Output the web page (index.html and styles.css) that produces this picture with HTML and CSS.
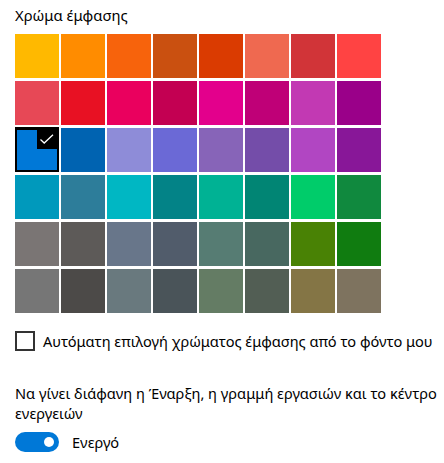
FILE: index.html
```html
<!DOCTYPE html>
<html lang="el">
<head>
	<meta charset="UTF-8">
	<title>Χρώμα έμφασης</title>
	<link rel="stylesheet" href="styles.css">
</head>
<body>

	<h1 class="title">Χρώμα έμφασης</h1>

	<div class="swatches">
		<div class="swatch" style="background:#ffb900"></div>
		<div class="swatch" style="background:#ff8c00"></div>
		<div class="swatch" style="background:#f7630c"></div>
		<div class="swatch" style="background:#ca5010"></div>
		<div class="swatch" style="background:#da3b01"></div>
		<div class="swatch" style="background:#ef6950"></div>
		<div class="swatch" style="background:#d13438"></div>
		<div class="swatch" style="background:#ff4343"></div>

		<div class="swatch" style="background:#e74856"></div>
		<div class="swatch" style="background:#e81123"></div>
		<div class="swatch" style="background:#ea005e"></div>
		<div class="swatch" style="background:#c30052"></div>
		<div class="swatch" style="background:#e3008c"></div>
		<div class="swatch" style="background:#bf0077"></div>
		<div class="swatch" style="background:#c239b3"></div>
		<div class="swatch" style="background:#9a0089"></div>

		<div class="swatch swatch-selected" style="background:#0078d7">
			<span class="swatch-check">
				<svg width="20" height="20" viewBox="0 0 20 20"><polyline points="3.5,10.5 7.2,14 16,5.8" fill="none" stroke="#fff" stroke-width="1.3"/></svg>
			</span>
		</div>
		<div class="swatch" style="background:#0063b1"></div>
		<div class="swatch" style="background:#8e8cd8"></div>
		<div class="swatch" style="background:#6b69d6"></div>
		<div class="swatch" style="background:#8764b8"></div>
		<div class="swatch" style="background:#744da9"></div>
		<div class="swatch" style="background:#b146c2"></div>
		<div class="swatch" style="background:#881798"></div>

		<div class="swatch" style="background:#0099bc"></div>
		<div class="swatch" style="background:#2d7d9a"></div>
		<div class="swatch" style="background:#00b7c3"></div>
		<div class="swatch" style="background:#038387"></div>
		<div class="swatch" style="background:#00b294"></div>
		<div class="swatch" style="background:#018574"></div>
		<div class="swatch" style="background:#00cc6a"></div>
		<div class="swatch" style="background:#10893e"></div>

		<div class="swatch" style="background:#7a7574"></div>
		<div class="swatch" style="background:#5d5a58"></div>
		<div class="swatch" style="background:#68768a"></div>
		<div class="swatch" style="background:#515c6b"></div>
		<div class="swatch" style="background:#567c73"></div>
		<div class="swatch" style="background:#486860"></div>
		<div class="swatch" style="background:#498205"></div>
		<div class="swatch" style="background:#107c10"></div>

		<div class="swatch" style="background:#767676"></div>
		<div class="swatch" style="background:#4c4a48"></div>
		<div class="swatch" style="background:#69797e"></div>
		<div class="swatch" style="background:#4a5459"></div>
		<div class="swatch" style="background:#647c64"></div>
		<div class="swatch" style="background:#525e54"></div>
		<div class="swatch" style="background:#847545"></div>
		<div class="swatch" style="background:#7e735f"></div>
	</div>

	<label class="check">
		<span class="check-box"></span>
		<span class="check-text">Αυτόματη επιλογή χρώματος έμφασης από το φόντο μου</span>
	</label>

	<p class="setting">Να γίνει διάφανη η Έναρξη, η γραμμή εργασιών και το κέντρο ενεργειών</p>

	<div class="toggle">
		<span class="toggle-track"><span class="toggle-knob"></span></span>
		<span class="toggle-text">Ενεργό</span>
	</div>

</body>
</html>
```

FILE: styles.css
```css
body {
	margin: 0;
	padding: 0 6px 0 15px;
	background: #fff;
	color: #000;
	font-family: "Noto Sans", "Open Sans", sans-serif;
	font-size: 14.6px;
}
.title {
	margin: 0;
	padding-top: 5px;
	height: 29px;
	font-size: 14.8px;
	font-weight: normal;
	line-height: 20px;
}
.swatches {
	display: grid;
	grid-template-columns: repeat(8, 44px);
	grid-auto-rows: 44px;
	column-gap: 2px;
	row-gap: 3px;
}
.swatch { position: relative }
.swatch-selected {
	box-shadow: inset 0 0 0 2px #000, 0 -1px 0 #000;
}
.swatch-check {
	position: absolute;
	top: 1px;
	right: 2px;
	width: 20px;
	height: 20px;
	background: #000;
}
.swatch-check svg { display: block }
.check {
	display: flex;
	align-items: center;
	gap: 8px;
	margin-top: 18px;
	height: 20px;
}
.check-box {
	width: 20px;
	height: 20px;
	box-sizing: border-box;
	border: 2px solid #333;
	flex: none;
}
.check-text { white-space: nowrap }
.setting {
	margin: 32px 0 0;
	line-height: 20px;
}
.toggle {
	display: flex;
	align-items: center;
	gap: 13px;
	margin-top: 9px;
	height: 20px;
}
.toggle-track {
	display: flex;
	align-items: center;
	justify-content: flex-end;
	box-sizing: border-box;
	width: 44px;
	height: 20px;
	padding-right: 5px;
	border-radius: 10px;
	background: #0078d7;
}
.toggle-knob {
	width: 10px;
	height: 10px;
	border-radius: 50%;
	background: #fff;
}
```
